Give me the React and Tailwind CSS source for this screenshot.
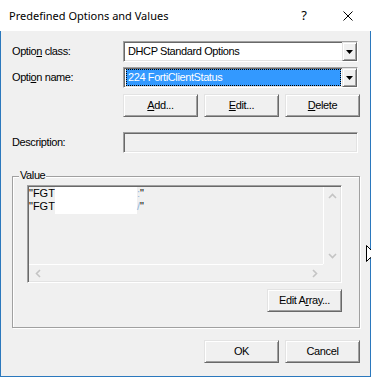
import React from "react";

const font =
  "font-['Liberation_Sans',Arial,sans-serif] text-[11px] tracking-[-0.4px] leading-[13px] text-black";
const raised =
  "bg-[#f0f0f0] border border-t-[#e3e3e3] border-l-[#e3e3e3] border-r-[#696969] border-b-[#696969] shadow-[inset_1px_1px_0_#ffffff,inset_-1px_-1px_0_#a0a0a0]";
const sunken =
  "border border-t-[#a0a0a0] border-l-[#a0a0a0] border-r-[#ffffff] border-b-[#ffffff] shadow-[inset_1px_1px_0_#696969,inset_-1px_-1px_0_#e3e3e3]";

function Btn({ children, w = "w-[75px]" }) {
  return (
    <div className={`${w} h-[23px] shrink-0 flex items-center justify-center ${raised}`}>
      <span className={font}>{children}</span>
    </div>
  );
}

function U({ children }) {
  return <span className="underline underline-offset-[1px] decoration-1">{children}</span>;
}

function DropBtn() {
  return (
    <div className={`w-[15px] h-full shrink-0 flex items-center justify-center ${raised}`}>
      <svg width="7" height="4" viewBox="0 0 7 4">
        <path d="M0 0H7L3.5 4Z" fill="#000" />
      </svg>
    </div>
  );
}

function Chev({ dir }) {
  const d = {
    up: "M1 5L4.5 1.5L8 5",
    down: "M1 1L4.5 4.5L8 1",
    left: "M5 1L1.5 4.5L5 8",
    right: "M1 1L4.5 4.5L1 8",
  }[dir];
  const horiz = dir === "left" || dir === "right";
  return (
    <svg
      width={horiz ? 6 : 9}
      height={horiz ? 9 : 6}
      viewBox={horiz ? "0 0 6 9" : "0 0 9 6"}
    >
      <path d={d} fill="none" stroke="#c4c4c4" strokeWidth="1.6" />
    </svg>
  );
}

function Combo({ text, selected }) {
  return (
    <div className={`w-[235px] h-[21px] shrink-0 bg-white ${sunken} pl-[2px] flex`}>
      <div className="flex-1 flex items-center mr-[1px]">
        {selected ? (
          <div className="w-full h-[17px] bg-[#3399ff] border border-dotted border-black flex items-center">
            <span className={`${font} text-white pl-[1px]`}>{text}</span>
          </div>
        ) : (
          <span className={`${font} pl-[2px]`}>{text}</span>
        )}
      </div>
      <DropBtn />
    </div>
  );
}

export default function App() {
  return (
    <div className="w-[371px] h-[377px] flex flex-col bg-white overflow-hidden relative">
      {/* Title bar */}
      <div className="h-[31px] shrink-0 flex items-center bg-white">
        <span className="ml-[9px] font-['Noto_Sans',sans-serif] text-[11px] text-black leading-none">
          Predefined Options and Values
        </span>
        <div className="flex-1" />
        <span className="w-[8px] text-center font-['Noto_Sans',sans-serif] text-[13px] leading-none text-black">
          ?
        </span>
        <svg width="10" height="10" viewBox="0 0 10 10" className="ml-[35px] mr-[18px]">
          <path d="M0.5 0.5L9.5 9.5M9.5 0.5L0.5 9.5" stroke="#000" strokeWidth="1" />
        </svg>
      </div>

      {/* Client area */}
      <div className="flex-1 bg-[#f0f0f0] border-l border-r border-b border-[#2b78bd] flex flex-col pl-[11px] pt-[10px]">
        {/* Option class */}
        <div className="flex items-center h-[21px]">
          <div className={`w-[111px] ${font}`}>
            Optio<U>n</U> class:
          </div>
          <Combo text="DHCP Standard Options" />
        </div>
        {/* Option name */}
        <div className="flex items-center h-[21px] mt-[5px]">
          <div className={`w-[111px] ${font}`}>
            Opti<U>o</U>n name:
          </div>
          <Combo text="224 FortiClientStatus" selected />
        </div>
        {/* Buttons */}
        <div className="flex gap-[6px] mt-[6px] ml-[111px]">
          <Btn>
            <U>A</U>dd...
          </Btn>
          <Btn>
            <U>E</U>dit...
          </Btn>
          <Btn>
            <U>D</U>elete
          </Btn>
        </div>
        {/* Description */}
        <div className="flex items-center h-[21px] mt-[15px]">
          <div className={`w-[111px] ${font}`}>Description:</div>
          <div className={`w-[235px] h-[21px] bg-[#f0f0f0] ${sunken}`} />
        </div>

        {/* Value group */}
        <div className="relative w-[348px] h-[152px] mt-[23px] border border-[#a0a0a0] shadow-[inset_1px_1px_0_#ffffff,1px_1px_0_#ffffff] pt-[8px] pl-[14px] flex flex-col">
          <span className={`absolute left-[6px] top-[-8px] px-[1px] bg-[#f0f0f0] ${font}`}>
            Value
          </span>
          {/* listbox */}
          <div className={`w-[315px] h-[98px] bg-[#f0f0f0] ${sunken} p-[1px] flex flex-col`}>
            <div className="flex-1 flex">
              <div className="flex-1 flex items-start">
                <div className={`w-[26px] flex flex-col ${font} tracking-normal`}>
                  <span>"FGT</span>
                  <span>"FGT</span>
                </div>
                <div className="w-[82px] h-[27px] bg-white" />
                <div className={`flex flex-col ${font} tracking-normal`}>
                  <span>
                    <span className="text-[#8fb6dc]">:</span>"
                  </span>
                  <span>
                    <span className="text-[#8fb6dc]">/</span>"
                  </span>
                </div>
              </div>
              <div className="w-[17px] border-l border-white flex flex-col justify-between">
                <div className="h-[17px] flex items-center justify-center">
                  <Chev dir="up" />
                </div>
                <div className="h-[17px] flex items-center justify-center">
                  <Chev dir="down" />
                </div>
              </div>
            </div>
            <div className="h-[17px] flex">
              <div className="flex-1 border-t border-white flex justify-between">
                <div className="w-[17px] flex items-center justify-center">
                  <Chev dir="left" />
                </div>
                <div className="w-[17px] flex items-center justify-center">
                  <Chev dir="right" />
                </div>
              </div>
              <div className="w-[17px]" />
            </div>
          </div>
          <div className="w-[315px] flex justify-end mt-[6px]">
            <Btn>
              Edit A<U>r</U>ray...
            </Btn>
          </div>
        </div>

        {/* OK / Cancel */}
        <div className="flex gap-[6px] mt-[12px] ml-[192px]">
          <Btn>OK</Btn>
          <Btn>Cancel</Btn>
        </div>
      </div>

      {/* mouse cursor */}
      <svg
        width="12"
        height="19"
        viewBox="0 0 12 19"
        className="absolute left-[366px] top-[245px]"
      >
        <path
          d="M0.5 0.5L0.5 16.5L4.5 12.5L7.5 18.5L9.5 17.5L6.5 11.5L11.5 11.5Z"
          fill="#fff"
          stroke="#000"
          strokeWidth="1"
        />
      </svg>
    </div>
  );
}
